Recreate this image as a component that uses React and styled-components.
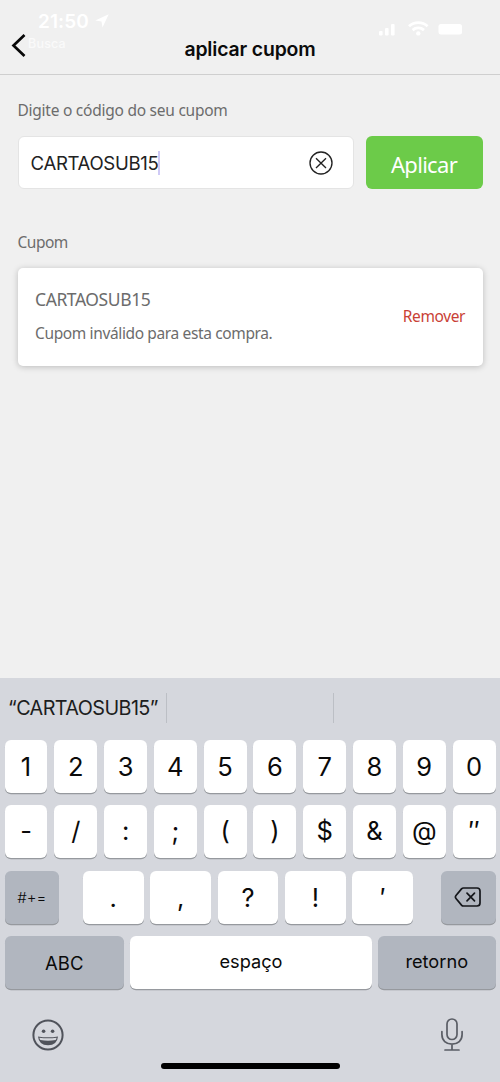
import React from "react";
import styled, { createGlobalStyle } from "styled-components";

const Global = createGlobalStyle`
  * { box-sizing: border-box; }
  body { margin: 0; background: #f0f0f0; }
  button { border: 0; margin: 0; padding: 0; background: none; font: inherit; color: inherit; }
`;

const system = `Inter, "Liberation Sans", sans-serif`;
const brand = `"Noto Sans", "Open Sans", sans-serif`;

const Screen = styled.main`
  width: 500px;
  height: 1082px;
  display: flex;
  flex-direction: column;
  background: #f0f0f0;
  font-family: ${system};
  overflow: hidden;
`;

const Header = styled.header`
  position: relative;
  height: 75px;
  flex: none;
  border-bottom: 1px solid #cfcfcf;
`;

const StatusBar = styled.div`
  position: absolute;
  inset: 0;
  color: #fff;
  display: flex;
  justify-content: space-between;
  padding: 10px 34px 0 38px;
`;

const Clock = styled.div`
  display: flex;
  gap: 6px;
  height: 22px;
  align-items: center;
  font-size: 19px;
  font-weight: 600;
  letter-spacing: 0.1px;
`;

const Indicators = styled.div`
  display: flex;
  align-items: center;
  height: 20px;
  margin-top: 8px;
`;

const BackApp = styled.span`
  position: absolute;
  left: 28px;
  top: 36px;
  font-size: 12.5px;
  line-height: 16px;
  font-weight: 500;
  letter-spacing: 0.2px;
  color: #fafafa;
`;

const BackButton = styled.button`
  position: absolute;
  left: 10px;
  top: 32px;
  line-height: 0;
`;

const Title = styled.h1`
  position: relative;
  margin: 0;
  padding-top: 36px;
  font-size: 19.4px;
  line-height: 26px;
  font-weight: 600;
  letter-spacing: -0.15px;
  text-align: center;
  color: #0b0b0b;
`;

const Content = styled.section`
  flex: 1;
  padding: 23px 17.5px 0;
  font-family: ${brand};
`;

const Label = styled.div`
  font-size: 15.5px;
  line-height: 24px;
  letter-spacing: ${(p) => p.$spacing || "0"};
  color: #6c6c6c;
`;

const Form = styled.div`
  display: flex;
  gap: 12px;
  margin: 14px 0 41px;
`;

const Field = styled.div`
  width: 336px;
  height: 53px;
  display: flex;
  align-items: center;
  padding: 0 20px 0 12px;
  border: 1px solid #e4e4e4;
  border-radius: 6px;
  background: #fff;
  font: 18.6px/24px ${system};
  letter-spacing: -0.33px;
  color: #222;
`;

const Caret = styled.i`
  width: 2px;
  height: 24px;
  margin-left: -1px;
  background: #cfcaf6;
`;

const ClearButton = styled.button`
  margin-left: auto;
  line-height: 0;
`;

const ApplyButton = styled.button`
  width: 117px;
  height: 53px;
  padding-top: 3px;
  border-radius: 6px;
  background: #6ccb49;
  color: #fff;
  font-family: ${brand};
  font-size: 22px;
  font-weight: 400;
  letter-spacing: -0.7px;
`;

const CouponCard = styled.article`
  display: flex;
  align-items: center;
  justify-content: space-between;
  height: 98px;
  margin-top: 13.5px;
  padding: 0 17.5px 2px;
  border-radius: 5px;
  background: #fff;
  box-shadow: 0 1px 6px rgba(0, 0, 0, 0.22);
`;

const CouponCode = styled.div`
  font-size: 17.5px;
  line-height: 24px;
  letter-spacing: -0.42px;
  color: #6c6c6c;
`;

const CouponMessage = styled.div`
  margin-top: 10px;
  font-size: 15.5px;
  line-height: 24px;
  letter-spacing: -0.37px;
  color: #6c6c6c;
`;

const RemoveButton = styled.button`
  font-size: 15.5px;
  line-height: 24px;
  letter-spacing: -0.4px;
  color: #c93f36;
`;

const Keyboard = styled.section`
  height: 404px;
  flex: none;
  display: flex;
  flex-direction: column;
  background: #d5d7dd;
  color: #0a0a0a;
`;

const Suggestions = styled.div`
  display: grid;
  grid-template-columns: 167px 167px 1fr;
  height: 30px;
  margin: 15px 0 17px;
`;

const Suggestion = styled.div`
  padding-left: 8px;
  border-right: ${(p) => (p.$last ? "0" : "1px solid #bcbfc5")};
  font-size: 19.8px;
  line-height: 30px;
  letter-spacing: -0.58px;
  color: #1c1d20;
  white-space: nowrap;
`;

const KeyRow = styled.div`
  display: flex;
  gap: ${(p) => p.$gap || "6.8px"};
  padding: 0 4.5px;
  margin-bottom: 12.4px;
`;

const Group = styled.div`
  display: flex;
  flex: 1;
  gap: 6.8px;
  padding-right: 4px;
`;

const Key = styled.button`
  flex: ${(p) => (p.$width ? "none" : "1 1 0")};
  width: ${(p) => p.$width || "auto"};
  height: 53px;
  display: flex;
  align-items: center;
  justify-content: center;
  padding-bottom: ${(p) => p.$lift || "0"};
  border-radius: 6px;
  background: ${(p) => (p.$dark ? "#b1b6bf" : "#fff")};
  box-shadow: 0 1.3px 0 #96999e;
  font-size: ${(p) => p.$size || "25.5px"};
  font-weight: ${(p) => p.$weight || 400};
`;

const BottomBar = styled.div`
  display: flex;
  justify-content: space-between;
  align-items: flex-start;
  height: 56px;
  padding: 16px 36.5px 0 32px;

  svg:first-child { margin-top: 1px; }
`;

const HomeIndicator = styled.div`
  width: 179px;
  height: 6px;
  margin: 5px auto 0;
  border-radius: 3px;
  background: #000;
`;

const LocationIcon = () => (
  <svg width="14" height="14" viewBox="0 0 14 14" fill="#fff">
    <path d="M13.7.2.3 6.5l6.2 1 1 6z" />
  </svg>
);

const SignalIcon = () => (
  <svg width="88" height="18" viewBox="0 0 88 18" fill="#fff">
    <rect x="1" y="12" width="3.6" height="4.5" rx="1" />
    <rect x="7" y="9" width="3.6" height="7.5" rx="1" />
    <rect x="13" y="5" width="3.6" height="11.5" rx="1" />
    <g fill="none" stroke="#fff" strokeWidth="2.8">
      <path d="M31 7.2a14 14 0 0 1 18.6 0" />
      <path d="M34.6 11.1a8.7 8.7 0 0 1 11.4 0" />
    </g>
    <circle cx="40.3" cy="14.4" r="2.2" />
    <rect x="60.5" y="5" width="23.5" height="10.5" rx="2.5" />
  </svg>
);

const ChevronIcon = () => (
  <svg width="18" height="28" viewBox="0 0 18 28" fill="none" stroke="#080808" strokeWidth="2.7">
    <path d="M14.5 3 3.5 13.5 14.5 24" />
  </svg>
);

const ClearIcon = () => (
  <svg width="24" height="24" viewBox="0 0 24 24" fill="none" stroke="#222" strokeWidth="1.35">
    <circle cx="12" cy="12" r="11" />
    <path d="m7 7.2 10 9.8M17 7.2 7 17" />
  </svg>
);

const DeleteIcon = () => (
  <svg width="28" height="22" viewBox="0 0 28 22" fill="none" stroke="#14161a" strokeWidth="1.7" strokeLinecap="round" strokeLinejoin="round">
    <path d="M9.5 2H23a3 3 0 0 1 3 3v12a3 3 0 0 1-3 3H9.5q-1.2 0-2-.9L2 12.5q-1.2-1.5 0-3l5.5-6.600q.8-.9 2-.9z" />
    <path d="m13 7.2 7.5 7.6M20.5 7.2 13 14.8" />
  </svg>
);

const EmojiIcon = () => (
  <svg width="32" height="32" viewBox="0 0 32 32">
    <circle cx="16" cy="16" r="14.6" fill="none" stroke="#50535b" strokeWidth="2" />
    <circle cx="11.6" cy="12.3" r="1.8" fill="#50535b" />
    <circle cx="20.6" cy="12.3" r="1.8" fill="#50535b" />
    <path d="M6 17.4q10 1.8 20 0-.8 8.6-10 8.8Q6.8 26 6 17.4z" fill="#50535b" />
    <path d="M7.4 18.7q8.6 1.300 17.2 0-.3 1.600-1 2.400-7.600 1.500-15.200 0-.7-.8-1-2.400z" fill="#d5d7dd" />
  </svg>
);

const MicIcon = () => (
  <svg width="24" height="34" viewBox="0 0 24 34" fill="none" stroke="#5a5d65" strokeWidth="1.7" strokeLinecap="round">
    <rect x="7" y="1" width="10" height="20.5" rx="5" />
    <path d="M1.9 13.5v3c0 6 4.2 9.6 10.1 9.6s10.1-3.6 10.1-9.6v-3M12 26.3v5.5M5 32h14" />
  </svg>
);

const digits = [..."1234567890"];
const symbols = ["-", "/", ":", ";", "(", ")", "$", "&", "@", "″"];
const punctuation = [".", ",", "?", "!", "′"];

export default function App() {
  return (
    <Screen>
      <Global />
      <Header>
        <Title>aplicar cupom</Title>
        <BackButton aria-label="Voltar"><ChevronIcon /></BackButton>
        <StatusBar>
          <Clock>21:50 <LocationIcon /></Clock>
          <Indicators><SignalIcon /></Indicators>
        </StatusBar>
        <BackApp>Busca</BackApp>
      </Header>
      <Content>
        <Label $spacing="-0.25px">Digite o código do seu cupom</Label>
        <Form>
          <Field>
            CARTAOSUB15
            <Caret />
            <ClearButton aria-label="Limpar"><ClearIcon /></ClearButton>
          </Field>
          <ApplyButton>Aplicar</ApplyButton>
        </Form>
        <Label $spacing="-0.5px">Cupom</Label>
        <CouponCard>
          <div>
            <CouponCode>CARTAOSUB15</CouponCode>
            <CouponMessage>Cupom inválido para esta compra.</CouponMessage>
          </div>
          <RemoveButton>Remover</RemoveButton>
        </CouponCard>
      </Content>
      <Keyboard>
        <Suggestions>
          <Suggestion>“CARTAOSUB15”</Suggestion>
          <Suggestion />
          <Suggestion $last />
        </Suggestions>
        <KeyRow>
          {digits.map((k) => <Key key={k}>{k}</Key>)}
        </KeyRow>
        <KeyRow>
          {symbols.map((k) => <Key key={k} $lift="2px">{k}</Key>)}
        </KeyRow>
        <KeyRow $gap="24px">
          <Key $dark $width="54.5px" $size="15px" $weight={300}>#+=</Key>
          <Group>
            {punctuation.map((k) => <Key key={k}>{k}</Key>)}
          </Group>
          <Key $dark $width="54.5px" aria-label="Apagar"><DeleteIcon /></Key>
        </KeyRow>
        <KeyRow $gap="6px">
          <Key $dark $width="119.5px" $size="18.5px">ABC</Key>
          <Key $size="18.2px" $lift="4px">espaço</Key>
          <Key $dark $width="117.5px" $size="18.2px" $lift="4px">retorno</Key>
        </KeyRow>
        <BottomBar>
          <EmojiIcon />
          <MicIcon />
        </BottomBar>
        <HomeIndicator />
      </Keyboard>
    </Screen>
  );
}
